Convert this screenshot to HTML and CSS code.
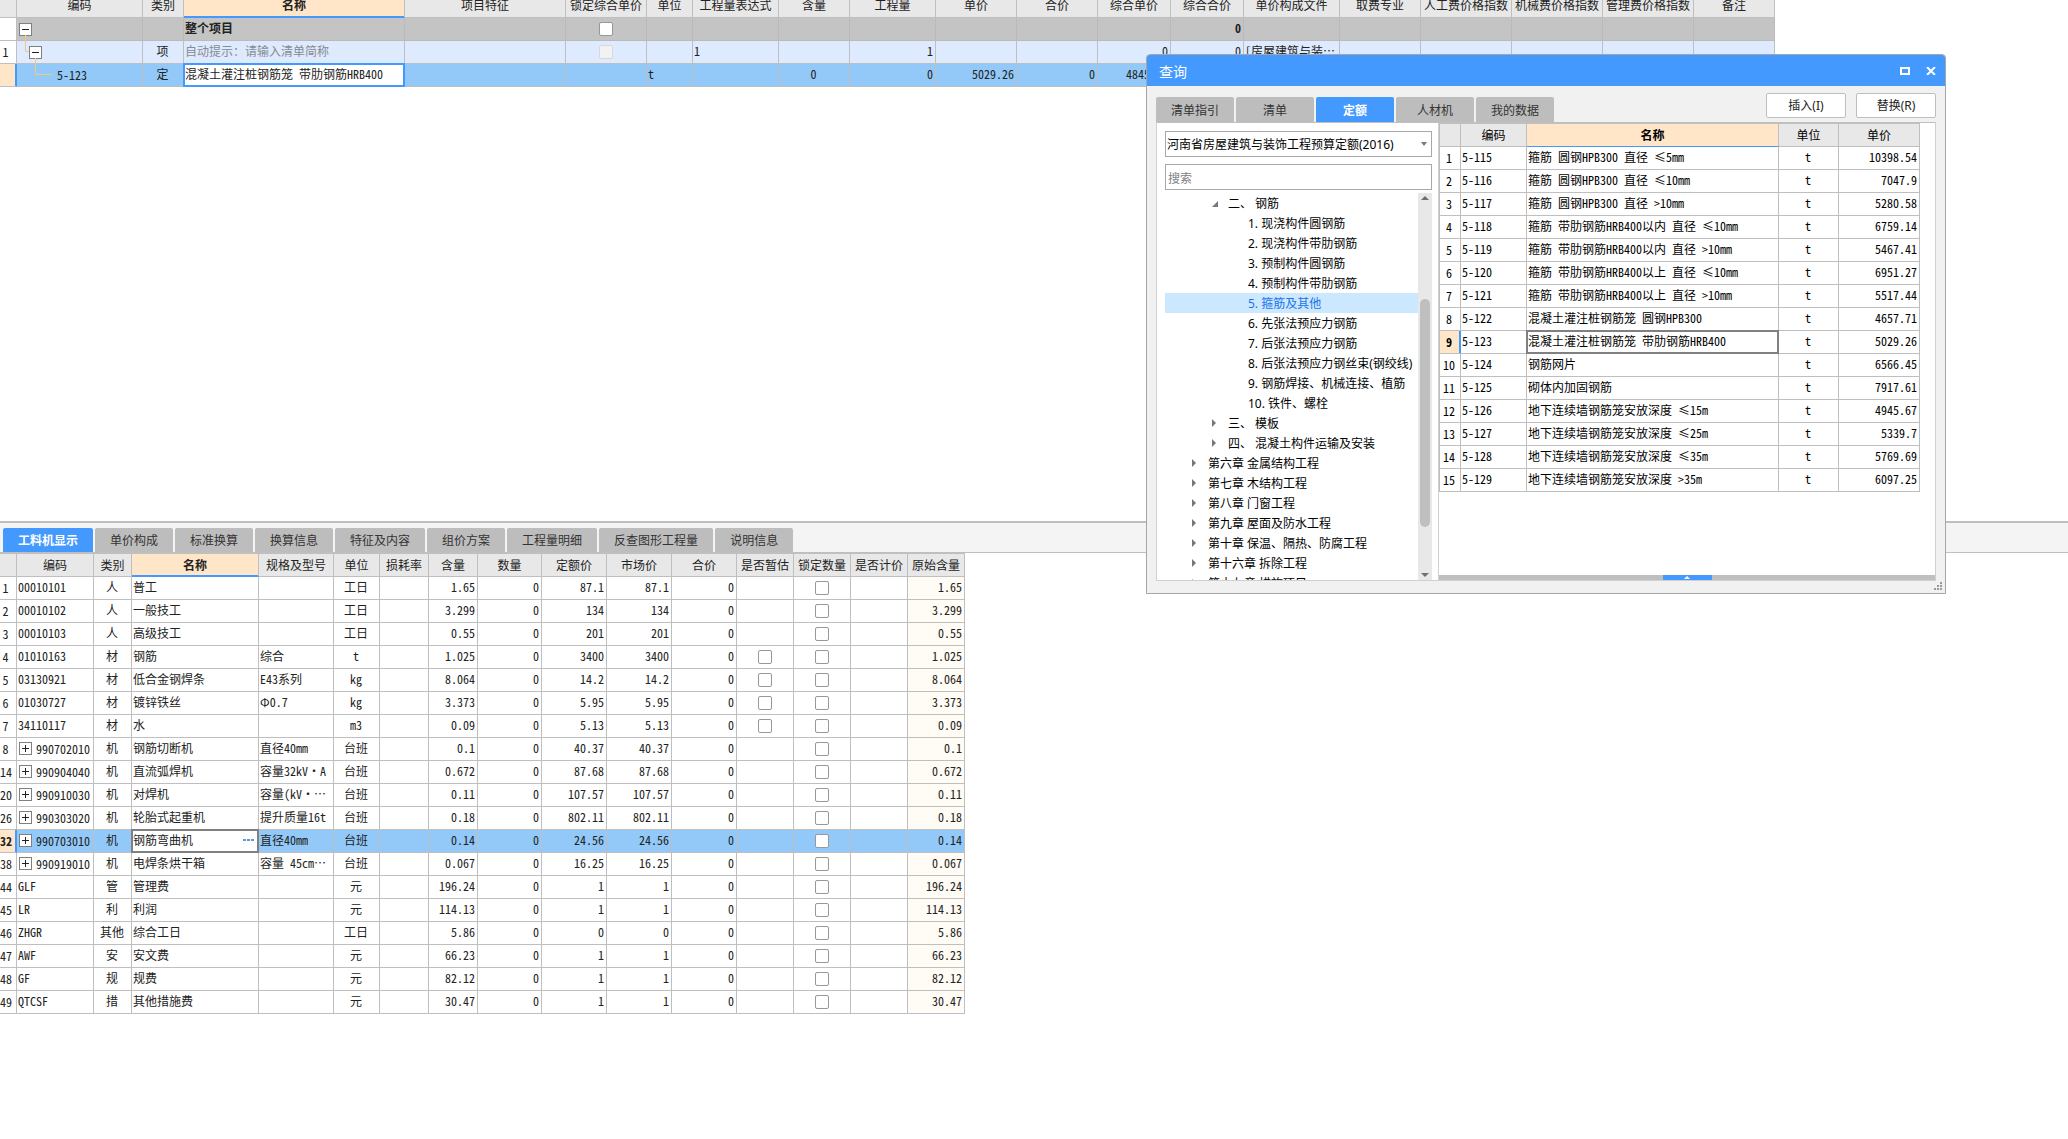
FILE: index.html
```html
<!DOCTYPE html>
<html lang="zh-CN">
<head>
<meta charset="utf-8">
<title>工程计价</title>
<link rel="stylesheet" href="styles.css">
</head>
<body>
<main class="workspace">
<section class="pane pane-items" aria-label="清单">
<table class="grid grid-items">
<colgroup><col><col><col><col><col><col><col><col><col><col><col><col><col><col><col><col><col><col><col><col></colgroup>
<thead>
<tr><th></th><th>编码</th><th>类别</th><th class="sorted">名称</th><th>项目特征</th><th>锁定综合单价</th><th>单位</th><th>工程量表达式</th><th>含量</th><th>工程量</th><th>单价</th><th>合价</th><th>综合单价</th><th>综合合价</th><th>单价构成文件</th><th>取费专业</th><th>人工费价格指数</th><th>机械费价格指数</th><th>管理费价格指数</th><th>备注</th></tr>
</thead>
<tbody>
<tr class="group"><th></th><td class="branch"><div class="node"><button class="expander" aria-label="折叠"></button></div><svg class="wires" width="40" height="56" viewBox="0 0 40 56" aria-hidden="true"><path d="M8.500 17V33.500H12M18.500 40V56" fill="none" stroke="#f6c583"/></svg></td><td></td><td>整个项目</td><td></td><td><input type="checkbox" aria-label="锁定综合单价"></td><td></td><td></td><td></td><td></td><td></td><td></td><td></td><td>0</td><td></td><td></td><td></td><td></td><td></td><td></td></tr>
<tr class="item"><th>1</th><td class="branch"><div class="node node-2"><button class="expander" aria-label="折叠"></button></div></td><td>项</td><td class="hint">自动提示：请输入清单简称</td><td></td><td><input type="checkbox" aria-label="锁定综合单价" disabled></td><td></td><td>1</td><td></td><td>1</td><td></td><td></td><td>0</td><td>0</td><td>[房屋建筑与装…</td><td></td><td></td><td></td><td></td><td></td></tr>
<tr class="selected"><th></th><td><div class="node node-3">5-123</div><svg class="wires" width="40" height="22" viewBox="0 0 40 22" aria-hidden="true"><path d="M18.500 0V10.500H35" fill="none" stroke="#f6c583"/></svg></td><td>定</td><td class="current editing"><input type="text" aria-label="名称" value="混凝土灌注桩钢筋笼 带肋钢筋HRB400"></td><td></td><td></td><td>t</td><td></td><td>0</td><td>0</td><td>5029.26</td><td>0</td><td>4845.07</td><td></td><td></td><td></td><td></td><td></td><td></td><td></td></tr>
</tbody>
</table>
</section>

<section class="pane pane-detail" aria-label="工料机">
<nav class="tabs">
<button class="tab active">工料机显示</button><button class="tab">单价构成</button><button class="tab">标准换算</button><button class="tab">换算信息</button><button class="tab">特征及内容</button><button class="tab">组价方案</button><button class="tab">工程量明细</button><button class="tab">反查图形工程量</button><button class="tab">说明信息</button>
</nav>
<table class="grid grid-detail">
<colgroup><col><col><col><col><col><col><col><col><col><col><col><col><col><col><col><col></colgroup>
<thead>
<tr><th></th><th>编码</th><th>类别</th><th class="sorted">名称</th><th>规格及型号</th><th>单位</th><th>损耗率</th><th>含量</th><th>数量</th><th>定额价</th><th>市场价</th><th>合价</th><th>是否暂估</th><th>锁定数量</th><th>是否计价</th><th>原始含量</th></tr>
</thead>
<tbody>
<tr><th>1</th><td>00010101</td><td>人</td><td>普工</td><td></td><td>工日</td><td></td><td>1.65</td><td>0</td><td>87.1</td><td>87.1</td><td>0</td><td></td><td><input type="checkbox" aria-label="锁定数量"></td><td></td><td>1.65</td></tr>
<tr><th>2</th><td>00010102</td><td>人</td><td>一般技工</td><td></td><td>工日</td><td></td><td>3.299</td><td>0</td><td>134</td><td>134</td><td>0</td><td></td><td><input type="checkbox" aria-label="锁定数量"></td><td></td><td>3.299</td></tr>
<tr><th>3</th><td>00010103</td><td>人</td><td>高级技工</td><td></td><td>工日</td><td></td><td>0.55</td><td>0</td><td>201</td><td>201</td><td>0</td><td></td><td><input type="checkbox" aria-label="锁定数量"></td><td></td><td>0.55</td></tr>
<tr><th>4</th><td>01010163</td><td>材</td><td>钢筋</td><td>综合</td><td>t</td><td></td><td>1.025</td><td>0</td><td>3400</td><td>3400</td><td>0</td><td><input type="checkbox" aria-label="是否暂估"></td><td><input type="checkbox" aria-label="锁定数量"></td><td></td><td>1.025</td></tr>
<tr><th>5</th><td>03130921</td><td>材</td><td>低合金钢焊条</td><td>E43系列</td><td>kg</td><td></td><td>8.064</td><td>0</td><td>14.2</td><td>14.2</td><td>0</td><td><input type="checkbox" aria-label="是否暂估"></td><td><input type="checkbox" aria-label="锁定数量"></td><td></td><td>8.064</td></tr>
<tr><th>6</th><td>01030727</td><td>材</td><td>镀锌铁丝</td><td>Φ0.7</td><td>kg</td><td></td><td>3.373</td><td>0</td><td>5.95</td><td>5.95</td><td>0</td><td><input type="checkbox" aria-label="是否暂估"></td><td><input type="checkbox" aria-label="锁定数量"></td><td></td><td>3.373</td></tr>
<tr><th>7</th><td>34110117</td><td>材</td><td>水</td><td></td><td>m3</td><td></td><td>0.09</td><td>0</td><td>5.13</td><td>5.13</td><td>0</td><td><input type="checkbox" aria-label="是否暂估"></td><td><input type="checkbox" aria-label="锁定数量"></td><td></td><td>0.09</td></tr>
<tr><th>8</th><td><div class="node"><button class="expander plus" aria-label="展开"></button>990702010</div></td><td>机</td><td>钢筋切断机</td><td>直径40mm</td><td>台班</td><td></td><td>0.1</td><td>0</td><td>40.37</td><td>40.37</td><td>0</td><td></td><td><input type="checkbox" aria-label="锁定数量"></td><td></td><td>0.1</td></tr>
<tr><th>14</th><td><div class="node"><button class="expander plus" aria-label="展开"></button>990904040</div></td><td>机</td><td>直流弧焊机</td><td>容量32kV·A</td><td>台班</td><td></td><td>0.672</td><td>0</td><td>87.68</td><td>87.68</td><td>0</td><td></td><td><input type="checkbox" aria-label="锁定数量"></td><td></td><td>0.672</td></tr>
<tr><th>20</th><td><div class="node"><button class="expander plus" aria-label="展开"></button>990910030</div></td><td>机</td><td>对焊机</td><td>容量(kV·…</td><td>台班</td><td></td><td>0.11</td><td>0</td><td>107.57</td><td>107.57</td><td>0</td><td></td><td><input type="checkbox" aria-label="锁定数量"></td><td></td><td>0.11</td></tr>
<tr><th>26</th><td><div class="node"><button class="expander plus" aria-label="展开"></button>990303020</div></td><td>机</td><td>轮胎式起重机</td><td>提升质量16t</td><td>台班</td><td></td><td>0.18</td><td>0</td><td>802.11</td><td>802.11</td><td>0</td><td></td><td><input type="checkbox" aria-label="锁定数量"></td><td></td><td>0.18</td></tr>
<tr class="selected"><th>32</th><td><div class="node"><button class="expander plus" aria-label="展开"></button>990703010</div></td><td>机</td><td class="current"><div class="picker">钢筋弯曲机<button class="more" aria-label="选择"><svg width="11" height="2" viewBox="0 0 11 2" aria-hidden="true"><path d="M0 0h3v2H0zM4 0h3v2H4zM8 0h3v2H8z" fill="#5b9bd5"/></svg></button></div></td><td>直径40mm</td><td>台班</td><td></td><td>0.14</td><td>0</td><td>24.56</td><td>24.56</td><td>0</td><td></td><td><input type="checkbox" aria-label="锁定数量"></td><td></td><td>0.14</td></tr>
<tr><th>38</th><td><div class="node"><button class="expander plus" aria-label="展开"></button>990919010</div></td><td>机</td><td>电焊条烘干箱</td><td>容量 45cm…</td><td>台班</td><td></td><td>0.067</td><td>0</td><td>16.25</td><td>16.25</td><td>0</td><td></td><td><input type="checkbox" aria-label="锁定数量"></td><td></td><td>0.067</td></tr>
<tr><th>44</th><td>GLF</td><td>管</td><td>管理费</td><td></td><td>元</td><td></td><td>196.24</td><td>0</td><td>1</td><td>1</td><td>0</td><td></td><td><input type="checkbox" aria-label="锁定数量"></td><td></td><td>196.24</td></tr>
<tr><th>45</th><td>LR</td><td>利</td><td>利润</td><td></td><td>元</td><td></td><td>114.13</td><td>0</td><td>1</td><td>1</td><td>0</td><td></td><td><input type="checkbox" aria-label="锁定数量"></td><td></td><td>114.13</td></tr>
<tr><th>46</th><td>ZHGR</td><td>其他</td><td>综合工日</td><td></td><td>工日</td><td></td><td>5.86</td><td>0</td><td>0</td><td>0</td><td>0</td><td></td><td><input type="checkbox" aria-label="锁定数量"></td><td></td><td>5.86</td></tr>
<tr><th>47</th><td>AWF</td><td>安</td><td>安文费</td><td></td><td>元</td><td></td><td>66.23</td><td>0</td><td>1</td><td>1</td><td>0</td><td></td><td><input type="checkbox" aria-label="锁定数量"></td><td></td><td>66.23</td></tr>
<tr><th>48</th><td>GF</td><td>规</td><td>规费</td><td></td><td>元</td><td></td><td>82.12</td><td>0</td><td>1</td><td>1</td><td>0</td><td></td><td><input type="checkbox" aria-label="锁定数量"></td><td></td><td>82.12</td></tr>
<tr><th>49</th><td>QTCSF</td><td>措</td><td>其他措施费</td><td></td><td>元</td><td></td><td>30.47</td><td>0</td><td>1</td><td>1</td><td>0</td><td></td><td><input type="checkbox" aria-label="锁定数量"></td><td></td><td>30.47</td></tr>
</tbody>
</table>
</section>
</main>

<section class="dialog" role="dialog" aria-labelledby="dialog-title">
<header class="titlebar">
<h1 id="dialog-title">查询</h1>
<button class="win-btn" aria-label="最大化"><svg width="10" height="8" viewBox="0 0 10 8"><path d="M1 1h8v6H1z" fill="none" stroke="#fff" stroke-width="2"/></svg></button>
<button class="win-btn" aria-label="关闭"><svg width="10" height="8" viewBox="0 0 10 8"><path d="M1 0L9 8M9 0L1 8" fill="none" stroke="#fff" stroke-width="2"/></svg></button>
</header>
<div class="toolbar">
<nav class="tabs">
<button class="tab">清单指引</button><button class="tab">清单</button><button class="tab active">定额</button><button class="tab">人材机</button><button class="tab">我的数据</button>
</nav>
<div class="actions"><button class="action">插入(I)</button><button class="action">替换(R)</button></div>
</div>
<div class="panel">
<aside class="sidebar">
<div class="combo">
<select aria-label="定额库"><option>河南省房屋建筑与装饰工程预算定额(2016)</option></select>
<svg width="6" height="4" viewBox="0 0 6 4" aria-hidden="true"><path d="M0 0h6L3 4z" fill="#7a7a7a"/></svg>
</div>
<input class="search" type="text" placeholder="搜索" aria-label="搜索">
<div class="tree-box">
<ul class="tree">
<li class="l2 open">二、 钢筋</li>
<li class="l3">1. 现浇构件圆钢筋</li>
<li class="l3">2. 现浇构件带肋钢筋</li>
<li class="l3">3. 预制构件圆钢筋</li>
<li class="l3">4. 预制构件带肋钢筋</li>
<li class="l3 chosen">5. 箍筋及其他</li>
<li class="l3">6. 先张法预应力钢筋</li>
<li class="l3">7. 后张法预应力钢筋</li>
<li class="l3">8. 后张法预应力钢丝束(钢绞线)</li>
<li class="l3">9. 钢筋焊接、机械连接、植筋</li>
<li class="l3">10. 铁件、螺栓</li>
<li class="l2 closed">三、 模板</li>
<li class="l2 closed">四、 混凝土构件运输及安装</li>
<li class="l1 closed">第六章 金属结构工程</li>
<li class="l1 closed">第七章 木结构工程</li>
<li class="l1 closed">第八章 门窗工程</li>
<li class="l1 closed">第九章 屋面及防水工程</li>
<li class="l1 closed">第十章 保温、隔热、防腐工程</li>
<li class="l1 closed">第十六章 拆除工程</li>
<li class="l1 closed">第十七章 措施项目</li>
</ul>
<div class="scrollbar" aria-hidden="true">
<svg width="8" height="4" viewBox="0 0 8 4"><path d="M0 4h8L4 0z" fill="#6f6f78"/></svg>
<div class="track"><div class="thumb"></div></div>
<svg width="8" height="4" viewBox="0 0 8 4"><path d="M0 0h8L4 4z" fill="#6f6f78"/></svg>
</div>
</div>
</aside>
<div class="results">
<table class="grid grid-results">
<colgroup><col><col><col><col><col></colgroup>
<thead><tr><th></th><th>编码</th><th class="sorted">名称</th><th>单位</th><th>单价</th></tr></thead>
<tbody>
<tr><th>1</th><td>5-115</td><td>箍筋 圆钢HPB300 直径 ≤5mm</td><td>t</td><td>10398.54</td></tr>
<tr><th>2</th><td>5-116</td><td>箍筋 圆钢HPB300 直径 ≤10mm</td><td>t</td><td>7047.9</td></tr>
<tr><th>3</th><td>5-117</td><td>箍筋 圆钢HPB300 直径 &gt;10mm</td><td>t</td><td>5280.58</td></tr>
<tr><th>4</th><td>5-118</td><td>箍筋 带肋钢筋HRB400以内 直径 ≤10mm</td><td>t</td><td>6759.14</td></tr>
<tr><th>5</th><td>5-119</td><td>箍筋 带肋钢筋HRB400以内 直径 &gt;10mm</td><td>t</td><td>5467.41</td></tr>
<tr><th>6</th><td>5-120</td><td>箍筋 带肋钢筋HRB400以上 直径 ≤10mm</td><td>t</td><td>6951.27</td></tr>
<tr><th>7</th><td>5-121</td><td>箍筋 带肋钢筋HRB400以上 直径 &gt;10mm</td><td>t</td><td>5517.44</td></tr>
<tr><th>8</th><td>5-122</td><td>混凝土灌注桩钢筋笼 圆钢HPB300</td><td>t</td><td>4657.71</td></tr>
<tr class="active-row"><th>9</th><td>5-123</td><td class="current">混凝土灌注桩钢筋笼 带肋钢筋HRB400</td><td>t</td><td>5029.26</td></tr>
<tr><th>10</th><td>5-124</td><td>钢筋网片</td><td>t</td><td>6566.45</td></tr>
<tr><th>11</th><td>5-125</td><td>砌体内加固钢筋</td><td>t</td><td>7917.61</td></tr>
<tr><th>12</th><td>5-126</td><td>地下连续墙钢筋笼安放深度 ≤15m</td><td>t</td><td>4945.67</td></tr>
<tr><th>13</th><td>5-127</td><td>地下连续墙钢筋笼安放深度 ≤25m</td><td>t</td><td>5339.7</td></tr>
<tr><th>14</th><td>5-128</td><td>地下连续墙钢筋笼安放深度 ≤35m</td><td>t</td><td>5769.69</td></tr>
<tr><th>15</th><td>5-129</td><td>地下连续墙钢筋笼安放深度 &gt;35m</td><td>t</td><td>6097.25</td></tr>
</tbody>
</table>
<div class="drawer"><button class="drawer-handle" aria-label="展开"><svg width="6" height="3" viewBox="0 0 6 3"><path d="M0 3h6L3 0z" fill="#fff"/></svg></button></div>
</div>
</div>
<svg class="grip" width="9" height="9" viewBox="0 0 9 9" aria-hidden="true"><path d="M6 0h2v2H6zM3 3h2v2H3zM6 3h2v2H6zM0 6h2v2H0zM3 6h2v2H3zM6 6h2v2H6z" fill="#9a9a9a"/></svg>
</section>
</body>
</html>
```

FILE: styles.css
```css
:root {
  --line: #bfbfbf;
  --blue: #4499ff;
  --select: #92c9f8;
  --sorted: #ffe6c8;
  --ui: "Noto Sans", "Noto Sans CJK SC", sans-serif;
  --mono: "Noto Sans Mono CJK SC", "Noto Sans CJK SC", monospace;
}

* { box-sizing: border-box; }

body {
  margin: 0;
  overflow: hidden;
  background: #fff;
  color: #222;
  font: 12px/20px var(--ui);
}

button, input, select {
  margin: 0;
  padding: 0;
  border: 0;
  font: inherit;
  color: inherit;
}

.workspace {
  display: flex;
  flex-direction: column;
  min-height: 100vh;
}

.pane-items {
  height: calc(46vh - 3px);
  overflow: hidden;
}

.pane-detail {
  flex: 1;
  border-top: 2px solid var(--line);
}

/* Tabs */
.tabs {
  display: flex;
  gap: 2px;
}

.pane-detail .tabs {
  padding: 5px 3px 0;
  background: #f4f4f4;
  border-bottom: 1px solid var(--line);
}

.tab {
  min-width: 78px;
  height: 24px;
  padding: 2px 15px 0;
  border-radius: 2px 2px 0 0;
  background: #bdbdbd;
  color: #333;
  white-space: nowrap;
}

.tab.active {
  background: var(--blue);
  color: #fff;
  font-weight: 700;
}

/* Grids */
.grid {
  table-layout: fixed;
  width: 0;
  border-collapse: separate;
  border-spacing: 0;
  font-family: var(--mono);
  line-height: 20px;
}

.grid th, .grid td {
  position: relative;
  height: 23px;
  padding: 0 2px 2px 1px;
  border-right: 1px solid var(--line);
  border-bottom: 1px solid var(--line);
  font-weight: 400;
  white-space: nowrap;
  text-align: center;
}

.grid td:has(.node), .grid td:has([type="checkbox"]) {
  padding: 0 1px;
}

.grid thead th {
  padding: 0;
  background: #e8e8e8;
}

.grid thead .sorted {
  background: var(--sorted);
  border-bottom-color: var(--blue);
  box-shadow: inset 0 -1px var(--blue);
  font-weight: 700;
}

.grid-results thead .sorted { box-shadow: none; }

.grid tbody th { padding: 0 5px 0 0; }

.grid .group { background: #c4c4c4; font-weight: 700; }
.grid .group td { font-weight: 700; border-color: #bababa; }
.grid .group th { background: #fff; }
.grid .item { background: #deeafe; }
.grid .item th { background: #fff; }
.grid .hint { color: #868b94; }
.grid .selected td { background: var(--select); }

.grid .selected th, .grid .active-row th {
  background: var(--sorted);
  border-right-color: var(--blue);
  box-shadow: inset -1px 0 var(--blue);
  font-weight: 700;
}

.grid .selected .current { background: #fff; }

.current::after {
  content: "";
  position: absolute;
  inset: -1px;
  border: 2px solid #808080;
  pointer-events: none;
}

.current.editing::after { border-color: var(--blue); }

.editing input {
  display: block;
  width: 100%;
  height: 20px;
  background: none;
  outline: 0;
}

.node {
  display: flex;
  align-items: center;
  gap: 4px;
  padding-left: 1px;
}

.node-2 { padding-left: 11px; }
.node-3 { padding-left: 39px; }

.wires {
  position: absolute;
  left: 0;
  top: 0;
  z-index: 1;
  pointer-events: none;
}

.expander {
  flex: none;
  width: 13px;
  height: 13px;
  border: 1px solid #808080;
  background: linear-gradient(#222, #222) center / 7px 1px no-repeat #fff;
}

.expander.plus {
  background:
    linear-gradient(#222, #222) center / 7px 1px no-repeat,
    linear-gradient(#222, #222) center / 1px 7px no-repeat,
    #fff;
}

.grid input[type="checkbox"] {
  display: block;
  width: 14px;
  height: 14px;
  margin: 0 auto;
  appearance: none;
  border: 1px solid #989898;
  border-radius: 2px;
  background: #fff;
}

.grid input[type="checkbox"]:disabled {
  border-color: #d8d8d8;
  background: #f2f2f2;
}

.picker {
  display: flex;
  align-items: center;
  justify-content: space-between;
}

.more {
  display: flex;
  padding-right: 2px;
  background: none;
}

/* Main item grid */
.grid-items { margin-top: -5px; }
.grid-items thead th { padding-bottom: 2px; }
.grid-items col:nth-child(1) { width: 17px; }
.grid-items col:nth-child(2) { width: 126px; }
.grid-items col:nth-child(3) { width: 41px; }
.grid-items col:nth-child(4) { width: 221px; }
.grid-items col:nth-child(5) { width: 161px; }
.grid-items col:nth-child(6) { width: 81px; }
.grid-items col:nth-child(7) { width: 46px; }
.grid-items col:nth-child(8) { width: 86px; }
.grid-items col:nth-child(9) { width: 71px; }
.grid-items col:nth-child(10) { width: 86px; }
.grid-items col:nth-child(n+11) { width: 81px; }
.grid-items col:nth-child(13), .grid-items col:nth-child(14) { width: 73px; }
.grid-items col:nth-child(15) { width: 96px; }
.grid-items col:nth-child(17), .grid-items col:nth-child(18), .grid-items col:nth-child(19) { width: 91px; }

.grid-items td:nth-child(4),
.grid-items td:nth-child(7),
.grid-items td:nth-child(8),
.grid-items td:nth-child(15) { text-align: left; }

.grid-items td:nth-child(n+10):nth-child(-n+14) { text-align: right; }

/* Resource detail grid */
.grid-detail { border-top: 1px solid var(--line); }
.grid-detail col { width: 57px; }
.grid-detail col:nth-child(1) { width: 17px; }
.grid-detail col:nth-child(2) { width: 77px; }
.grid-detail col:nth-child(3) { width: 38px; }
.grid-detail col:nth-child(4) { width: 127px; }
.grid-detail col:nth-child(5) { width: 75px; }
.grid-detail col:nth-child(6) { width: 46px; }
.grid-detail col:nth-child(7), .grid-detail col:nth-child(8) { width: 49px; }
.grid-detail col:nth-child(9) { width: 64px; }
.grid-detail col:nth-child(10), .grid-detail col:nth-child(11), .grid-detail col:nth-child(12) { width: 65px; }

.grid-detail td:nth-child(2),
.grid-detail td:nth-child(4),
.grid-detail td:nth-child(5) { text-align: left; }

.grid-detail td:nth-child(n+8):nth-child(-n+12),
.grid-detail td:nth-child(16) { text-align: right; }

.grid-detail tr:not(.selected) td:nth-child(16) { background: #fffbf5; }

/* Query dialog */
.dialog {
  position: absolute;
  left: 1146px;
  top: 54px;
  display: flex;
  flex-direction: column;
  width: 800px;
  height: 540px;
  border: 1px solid #a6a6a6;
  border-radius: 4px 4px 0 0;
  background: #f1f1f1;
  overflow: hidden;
}

.titlebar {
  display: flex;
  align-items: center;
  gap: 16px;
  height: 31px;
  padding: 0 9px 0 12px;
  background: var(--blue);
  color: #fff;
}

.titlebar h1 {
  flex: 1;
  margin: 0;
  padding-top: 2px;
  font-size: 14px;
  font-weight: 400;
}

.win-btn {
  display: flex;
  background: none;
}

.toolbar {
  display: flex;
  align-items: flex-end;
  justify-content: space-between;
  height: 36px;
  padding: 0 9px;
}

.toolbar .tab { height: 25px; }

.actions {
  display: flex;
  gap: 10px;
  padding-bottom: 4px;
}

.action {
  width: 80px;
  height: 25px;
  border: 1px solid var(--line);
  border-radius: 2px;
  background: #fff;
}

.panel {
  display: flex;
  flex: 1;
  min-height: 0;
  margin: 0 9px 12px;
  border: 1px solid #d0d0d0;
  border-top-color: var(--line);
  background: #fff;
  color: #000;
}

.sidebar {
  display: flex;
  flex-direction: column;
  width: 282px;
  padding: 8px 6px 0 8px;
  border-right: 1px solid #d0d0d0;
}

.combo {
  position: relative;
  height: 26px;
}

.combo select {
  width: 100%;
  height: 26px;
  padding: 2px 1px 0;
  appearance: none;
  border: 1px solid #a8a8a8;
  border-radius: 0;
  background: #fff;
}

.combo svg {
  position: absolute;
  right: 5px;
  top: 11px;
}

.search {
  height: 26px;
  margin: 7px 0 3px;
  padding: 2px 2px 0;
  border: 1px solid #a8a8a8;
}

.search::placeholder { color: #808080; opacity: 1; }

.tree-box {
  display: flex;
  flex: 1;
  min-height: 0;
}

.tree {
  flex: 1;
  margin: 0;
  padding: 0;
  overflow: hidden;
  list-style: none;
  line-height: 22px;
  white-space: nowrap;
}

.tree li { position: relative; height: 20px; }
.tree .l1 { padding-left: 43px; }
.tree .l2 { padding-left: 63px; }
.tree .l3 { padding-left: 83px; }
.tree .chosen { background: #cce8ff; color: #1a73e8; }

.tree .open::before, .tree .closed::before {
  content: "";
  position: absolute;
  top: 6px;
  margin-left: -16px;
  width: 4px;
  height: 8px;
  background: #777;
  clip-path: polygon(0 0, 100% 50%, 0 100%);
}

.tree .open::before {
  top: 8px;
  width: 6px;
  height: 6px;
  clip-path: polygon(100% 0, 100% 100%, 0 100%);
}

.scrollbar {
  display: flex;
  flex-direction: column;
  align-items: center;
  gap: 3px;
  width: 14px;
  padding: 3px 0;
  background: #e8e8e8;
}

.track {
  flex: 1;
  width: 10px;
  padding-top: 96px;
}

.thumb {
  height: 84%;
  border-radius: 5px;
  background: #bfbfbf;
}

.results {
  display: flex;
  flex: 1;
  flex-direction: column;
  justify-content: space-between;
}

.grid-results {
  border-top: 1px solid var(--line);
  border-left: 1px solid var(--line);
}

.grid-results tbody th { padding: 0 2px 0 0; }
.grid-results col:nth-child(1) { width: 21px; }
.grid-results col:nth-child(2) { width: 66px; }
.grid-results col:nth-child(3) { width: 252px; }
.grid-results col:nth-child(4) { width: 60px; }
.grid-results col:nth-child(5) { width: 81px; }
.grid-results td:nth-child(2), .grid-results td:nth-child(3) { text-align: left; }
.grid-results td:nth-child(5) { text-align: right; }

.drawer {
  display: flex;
  justify-content: center;
  height: 5px;
  background: var(--line);
}

.drawer-handle {
  display: flex;
  align-items: center;
  justify-content: center;
  width: 49px;
  background: var(--blue);
}

.grip {
  position: absolute;
  right: 2px;
  bottom: 2px;
}
```
